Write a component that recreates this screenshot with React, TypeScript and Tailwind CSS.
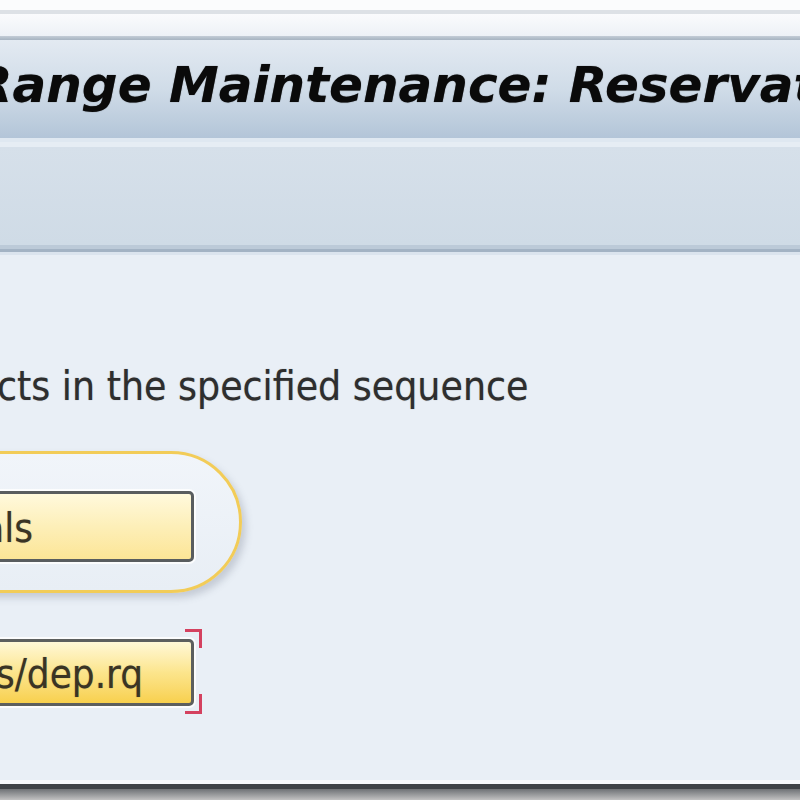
import React from "react";

const bodyFont = "font-['DejaVu_Sans_Condensed','DejaVu_Sans',sans-serif]";

const App = () => {
  return (
    <div className="w-[800px] h-[800px] overflow-hidden flex flex-col bg-[#e9eff6]">
      {/* window frame top */}
      <div className="h-[10px] bg-[#fbfcfd]" />
      <div className="h-[4px] bg-[#dde1e6]" />
      <div className="h-[22px] bg-gradient-to-b from-[#fafbfd] to-[#edf1f6]" />
      <div className="h-[4px] bg-gradient-to-b from-[#c3ccd6] to-[#a6b3c1]" />

      {/* title bar */}
      <div className="h-[98px] bg-gradient-to-b from-[#e3eaf2] via-[#d0dce8] to-[#b3c5d8] pt-[20px] overflow-hidden">
        <div className="ml-[-26px] whitespace-nowrap font-['DejaVu_Sans',sans-serif] font-bold italic text-[50px] leading-none text-[#0a0a0a] [text-shadow:0_0_1px_rgba(0,0,0,0.6)]">
          Range Maintenance: Reservations
        </div>
      </div>
      <div className="h-[4px] bg-[#dfe8f1]" />
      <div className="h-[5px] bg-[#e6edf4]" />

      {/* application toolbar */}
      <div className="h-[98px] bg-gradient-to-b from-[#d6e0ea] to-[#cfdbe6]" />
      <div className="h-[4px] bg-[#bccad8]" />
      <div className="h-[3px] bg-[#a3b3c4]" />
      <div className="h-[3px] bg-[#dbe4ee]" />

      {/* body */}
      <div className={`flex-1 flex flex-col ${bodyFont} text-[#2e2e2e] [text-shadow:0_0_1px_rgba(40,40,40,0.45)]`}>
        <div className="mt-[111px] h-[40px] ml-[-3px] whitespace-nowrap text-[40.5px] leading-none">
          cts in the specified sequence
        </div>

        {/* focused button with highlight ring */}
        <div className="mt-[45px] ml-[-300px] w-[542px] h-[142px] rounded-full border-[3px] border-[#f2cc58] bg-gradient-to-b from-[#f1f5fa] to-[#e8eef5] shadow-[4px_5px_7px_rgba(90,100,120,0.25)]">
          <div className="mt-[37px] w-[491px] h-[71px] rounded-[5px] border-[3px] border-[#595d5f] bg-gradient-to-b from-[#fff9dc] via-[#fdefb8] to-[#fce596] shadow-[0_0_0_2px_rgba(255,255,255,0.8)] flex items-center pt-[3px]">
            <span className="w-[327px] text-right whitespace-nowrap text-[40px] leading-none text-[#3a3424]">
              Materials
            </span>
          </div>
        </div>

        {/* second button with red corner marks */}
        <div className="mt-[46px] ml-[-300px] w-[494px] h-[67px] relative">
          <div className="w-full h-full rounded-[5px] border-[3px] border-[#5c5f5e] bg-gradient-to-b from-[#fff8d6] via-[#fce58c] to-[#f8d04c] shadow-[0_0_0_2px_rgba(255,255,255,0.8)] flex items-center pt-[3px]">
            <span className="w-[440px] text-right whitespace-nowrap text-[40px] leading-none text-[#3a3424]">
              Reservations/dep.rq
            </span>
          </div>
          <div className="absolute right-[-8px] top-[-10px] w-[17px] h-[19px] border-t-[3px] border-r-[3px] border-[#d4415f]" />
          <div className="absolute right-[-8px] bottom-[-8px] w-[17px] h-[20px] border-b-[3px] border-r-[3px] border-[#d4415f]" />
        </div>
      </div>

      {/* window frame bottom */}
      <div className="h-[4px] bg-[#f6f8fb]" />
      <div className="h-[5px] bg-[#3e4247]" />
      <div className="h-[11px] bg-gradient-to-b from-[#6f7276] to-[#c2c2c2]" />
    </div>
  );
};

export default App;
